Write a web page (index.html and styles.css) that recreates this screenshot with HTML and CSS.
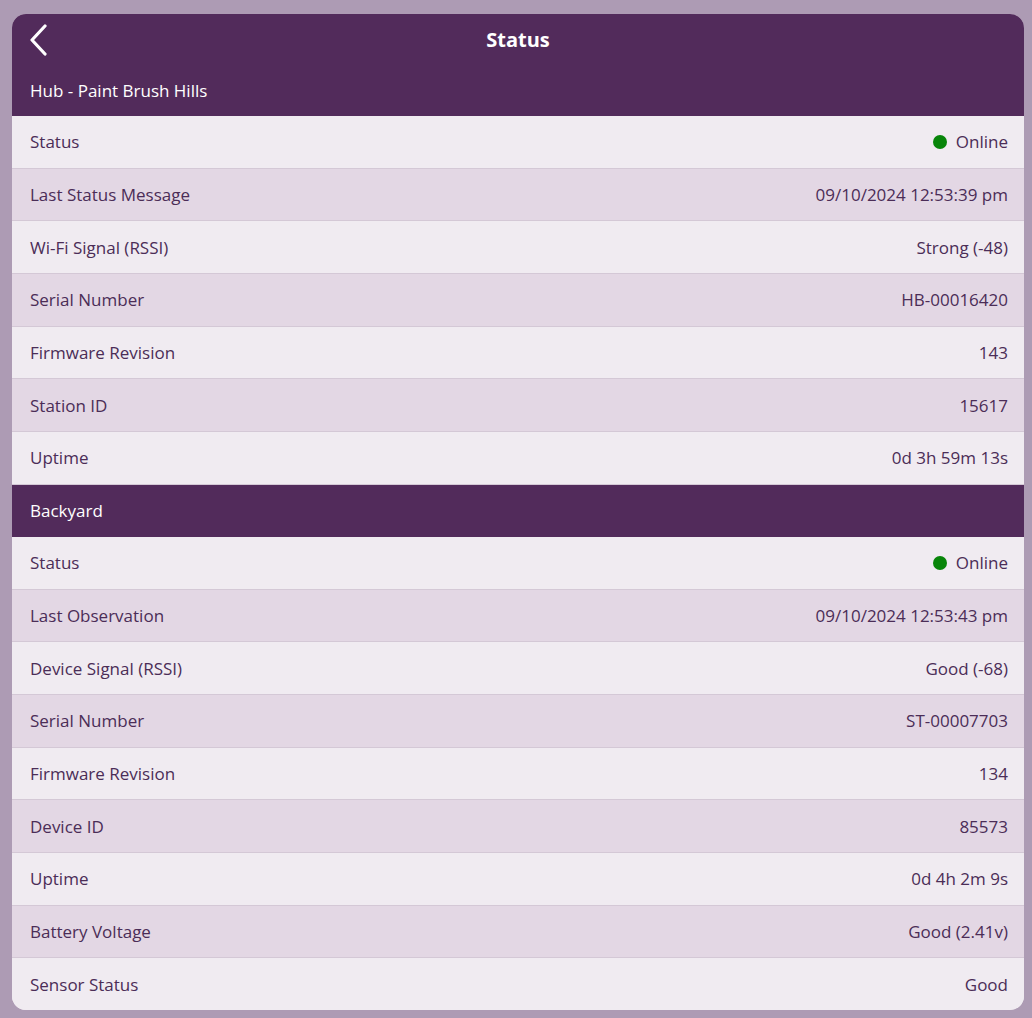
FILE: index.html
```html
<!DOCTYPE html>
<html>
<head>
<meta charset="utf-8">
<link rel="stylesheet" href="styles.css">
</head>
<body>
<div class="card">
  <div class="titlebar">
    <span class="back">
      <svg width="20" height="32" viewBox="0 0 20 32"><path d="M17 2 L4 16 L17 30" fill="none" stroke="#fff" stroke-width="3.2" stroke-linecap="round" stroke-linejoin="round"/></svg>
    </span>
    <h1 class="title">Status</h1>
  </div>
  <div class="section">Hub - Paint Brush Hills</div>
  <div class="row"><span>Status</span><span class="val"><i class="dot"></i>Online</span></div>
  <div class="row alt"><span>Last Status Message</span><span class="val">09/10/2024 12:53:39 pm</span></div>
  <div class="row"><span>Wi-Fi Signal (RSSI)</span><span class="val">Strong (-48)</span></div>
  <div class="row alt"><span>Serial Number</span><span class="val">HB-00016420</span></div>
  <div class="row"><span>Firmware Revision</span><span class="val">143</span></div>
  <div class="row alt"><span>Station ID</span><span class="val">15617</span></div>
  <div class="row"><span>Uptime</span><span class="val">0d 3h 59m 13s</span></div>
  <div class="section">Backyard</div>
  <div class="row"><span>Status</span><span class="val"><i class="dot"></i>Online</span></div>
  <div class="row alt"><span>Last Observation</span><span class="val">09/10/2024 12:53:43 pm</span></div>
  <div class="row"><span>Device Signal (RSSI)</span><span class="val">Good (-68)</span></div>
  <div class="row alt"><span>Serial Number</span><span class="val">ST-00007703</span></div>
  <div class="row"><span>Firmware Revision</span><span class="val">134</span></div>
  <div class="row alt"><span>Device ID</span><span class="val">85573</span></div>
  <div class="row"><span>Uptime</span><span class="val">0d 4h 2m 9s</span></div>
  <div class="row alt"><span>Battery Voltage</span><span class="val">Good (2.41v)</span></div>
  <div class="row last"><span>Sensor Status</span><span class="val">Good</span></div>
</div>
</body>
</html>
```
FILE: styles.css
```css
html, body {
  margin: 0;
  padding: 0;
}
body {
  background: #ad9bb4;
  padding: 14px 8px 8px 12px;
  font-family: "Open Sans", "Noto Sans", sans-serif;
  color: #4b2d57;
}
.card {
  background: #f0ebf1;
  border-radius: 14px;
  overflow: hidden;
}
.titlebar {
  background: #522b5b;
  height: 50px;
  display: flex;
  align-items: center;
  justify-content: center;
  position: relative;
}
.back {
  position: absolute;
  left: 16px;
  top: 10px;
  display: flex;
}
.title {
  margin: 0;
  color: #fff;
  font-size: 20px;
  font-weight: 700;
}
.section {
  background: #522b5b;
  color: #fff;
  height: 52px;
  display: flex;
  align-items: center;
  padding-left: 18px;
  font-size: 17px;
}
.row {
  height: 51.7px;
  display: flex;
  align-items: center;
  justify-content: space-between;
  padding: 0 16px 0 18px;
  font-size: 17px;
  background: #f0ebf1;
  border-bottom: 1px solid #d4c8d6;
}
.row.alt {
  background: #e3d7e4;
}
.row.last {
  border-bottom: none;
}
.val {
  display: flex;
  align-items: center;
}
.dot {
  width: 14px;
  height: 14px;
  border-radius: 50%;
  background: #08850a;
  margin-right: 9px;
}
```
